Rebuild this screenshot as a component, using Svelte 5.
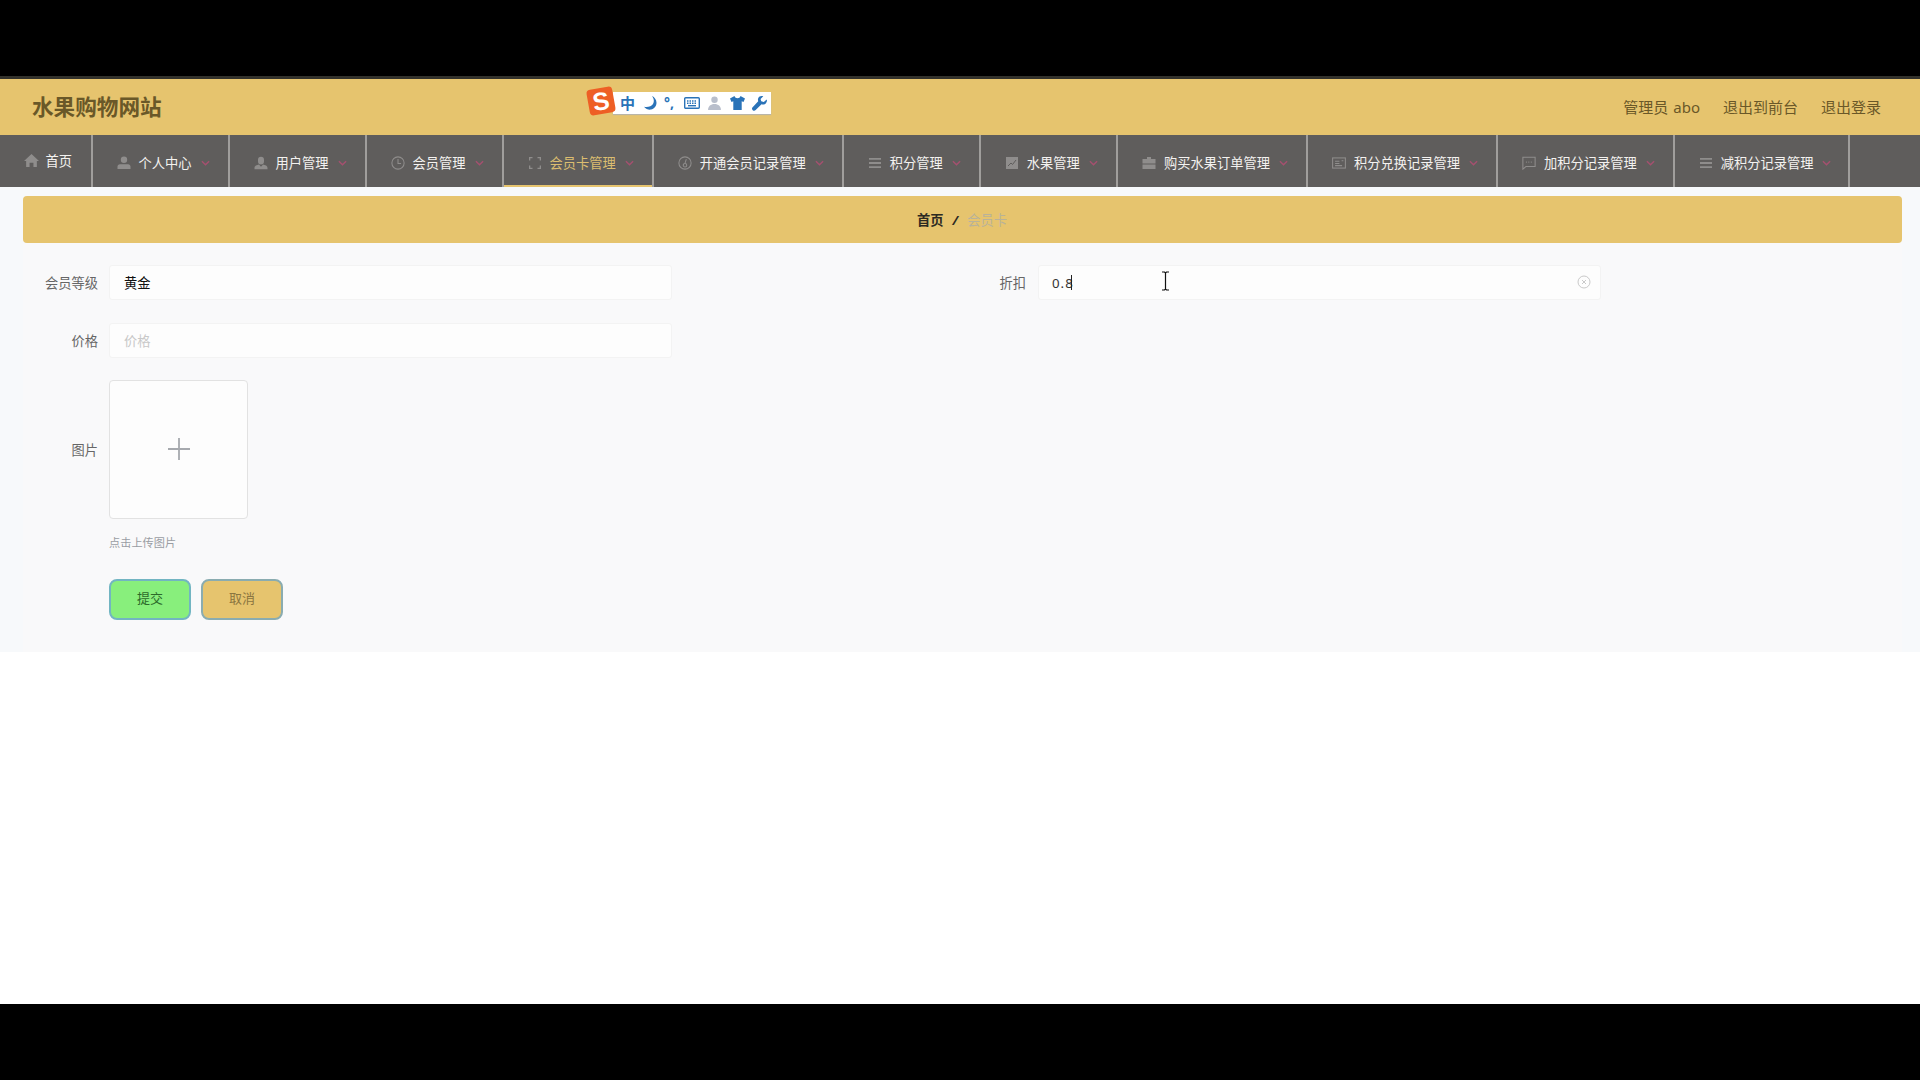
<script lang="ts">
  const icons: Record<string, string> = {
    home: 'M7 1 L14 7.5 H12 V13 H8.8 V9 H5.2 V13 H2 V7.5 H0 Z',
    person: 'M7 .5a3.200 3.200 0 1 1 0 6.400a3.200 3.200 0 0 1 0-6.400z M3 8.200h8c1.500 0 2.500 1 2.500 2.400V13H.5v-2.400c0-1.400 1-2.400 2.500-2.400z',
    user: 'M7 .8a3 3 0 0 1 3 3v1.700a3 3 0 0 1-6 0V3.800a3 3 0 0 1 3-3z M.5 13.200v-1.500c0-1.700 2.300-2.800 4.500-3.200l2 2.200 2-2.200c2.200.4 4.500 1.500 4.500 3.200v1.500z',
    card: 'M1 1h3.500v1.300H2.300v2.200H1z M9.500 1H13v3.500h-1.300V2.300H9.500z M1 9.500h1.300v2.200h2.200V13H1z M11.700 9.500H13V13H9.500v-1.300h2.200z',
    bars: 'M1 2h12v1.800H1z M1 6.100h12v1.800H1z M1 10.200h12V12H1z',
    chart: 'M1 1h12v12H1z',
    bag: 'M5 1h4v2h4.500v4.500h-13V3H5z M.5 8.500h13V13h-13z'
  };

  const menu = [
    { label: '个人中心', icon: 'person' },
    { label: '用户管理', icon: 'user' },
    { label: '会员管理', icon: 'clock' },
    { label: '会员卡管理', icon: 'card', active: true },
    { label: '开通会员记录管理', icon: 'gauge' },
    { label: '积分管理', icon: 'bars' },
    { label: '水果管理', icon: 'chart' },
    { label: '购买水果订单管理', icon: 'bag' },
    { label: '积分兑换记录管理', icon: 'ticket' },
    { label: '加积分记录管理', icon: 'chat' },
    { label: '减积分记录管理', icon: 'bars' }
  ];
</script>

<div class="screen">
  <header class="top">
    <h1>水果购物网站</h1>
    <div class="links">
      <span>管理员 abo</span>
      <span>退出到前台</span>
      <span>退出登录</span>
    </div>

    <div class="ime">
      <span class="ime-logo">S</span>
      <span class="ime-zh">中</span>
      <svg width="14" height="14" viewBox="0 0 14 14"><path fill="#2a73b8" d="M9 0c2 2.500 2.500 5.500 1 8-1.500 2.400-5 3.500-9 2.800C2.800 13 5.500 14 8 13.600c3-.5 5.500-3.500 5.500-6.800C13.500 3.800 11.500 1 9 0z" /></svg>
      <span class="ime-punct">°,</span>
      <svg width="16" height="12" viewBox="0 0 16 12"><rect x=".7" y=".7" width="14.600" height="10.600" rx="1" fill="none" stroke="#2a73b8" stroke-width="1.400" /><path stroke="#2a73b8" stroke-width="1.500" stroke-dasharray="1.500 1" d="M3 4h10M3 6.200h10" /><path stroke="#2a73b8" stroke-width="1.400" d="M4 8.700h8" /></svg>
      <svg width="15" height="15" viewBox="0 0 12 14"><circle cx="6" cy="3.500" r="3" fill="#b9bfcc" /><path fill="#b9bfcc" d="M0 13c0-3.500 2.500-5.500 6-5.500s6 2 6 5.500z" /></svg>
      <svg width="15" height="14" viewBox="0 0 15 14"><path fill="#2a73b8" d="M4.500 0 0 2.500l1.500 3.500 1.800-.8V14h8.400V5.200l1.800.8L15 2.500 10.500 0C10 1.500 9 2.200 7.500 2.200S5 1.500 4.500 0z" /></svg>
      <svg width="15" height="15" viewBox="0 0 14 14"><path fill="#2a73b8" d="M13.700 3.200 11 5.700 8.600 5 8 2.700 10.500.3C8.500-.4 6.500.4 5.800 2c-.4 1-.3 2 0 2.800L.6 10.500a1.900 1.900 0 0 0 2.800 2.600l5.500-5.300c1 .4 2.300.3 3.400-.4 1.400-1 2-3 1.400-4.200z" /></svg>
    </div>
  </header>

  <nav class="menu">
    <a class="item home" href="#/">
      <svg class="icon" viewBox="0 0 14 14"><path d={icons.home} /></svg>
      <span>首页</span>
    </a>
    {#each menu as m}
      <a class="item" class:active={m.active} href="#/">
        {#if m.icon === 'clock'}
          <svg class="icon line" viewBox="0 0 16 16"><circle cx="8" cy="8" r="7" /><path d="M8 3.500V8.500H11.500" /></svg>
        {:else if m.icon === 'gauge'}
          <svg class="icon line" viewBox="0 0 16 16"><circle cx="8" cy="8" r="7" /><circle cx="8" cy="10.500" r="2" /><path d="M8 8.500 9.500 3.500" /></svg>
        {:else if m.icon === 'ticket'}
          <svg class="icon line" viewBox="0 0 16 14"><rect x=".7" y="1.200" width="14.600" height="11.600" /><path d="M3.500 5h5M3.500 7.500h5M3.500 10h8M11 4.500h2" /></svg>
        {:else if m.icon === 'chat'}
          <svg class="icon line" viewBox="0 0 16 16"><path d="M1 1.500h14v10.500H4.500L1 15z" /><path stroke-dasharray="1 1.800" d="M4.500 7h7.500" /></svg>
        {:else if m.icon === 'chart'}
          <svg class="icon" viewBox="0 0 14 14"><path d={icons.chart} /><path class="spark" d="M3 10 6 7l1.500 1.500L11 4" /></svg>
        {:else}
          <svg class="icon" viewBox="0 0 14 14"><path d={icons[m.icon]} /></svg>
        {/if}
        <span>{m.label}</span>
        <svg class="arrow" viewBox="0 0 10 6"><path d="M1 1 5 5 9 1" /></svg>
      </a>
    {/each}
  </nav>

  <main class="content">
    <div class="panel">
      <div class="crumb">
        <b>首页</b>
        <i>/</i>
        <em>会员卡</em>
      </div>

      <form class="form">
        <div class="row">
          <div class="field">
            <label for="level">会员等级</label>
            <input id="level" value="黄金" />
          </div>
          <div class="field right">
            <label for="discount">折扣</label>
            <div class="box">
              <input id="discount" class="num" value="0.8" />
              <span class="caret"></span>
              <svg class="clear" viewBox="0 0 14 14"><circle cx="7" cy="7" r="6" /><path d="M5 5 9 9M9 5 5 9" /></svg>
              <svg class="ibeam" viewBox="0 0 9 20"><path d="M1 1h2.500l1 1 1-1H8M4.500 2v16M1 19h2.500l1-1 1 1H8" /></svg>
            </div>
          </div>
        </div>

        <div class="field">
          <label for="price">价格</label>
          <input id="price" placeholder="价格" />
        </div>

        <div class="field upload-field">
          <span class="label">图片</span>
          <div class="upload">
            <svg viewBox="0 0 22 22"><path d="M11 0V22M0 11H22" /></svg>
          </div>
        </div>

        <p class="hint">点击上传图片</p>

        <div class="actions">
          <button type="button" class="ok">提交</button>
          <button type="button" class="cancel">取消</button>
        </div>
      </form>
    </div>
  </main>
</div>

<style>
  :global(body) {
    background: #000;
  }

  .screen {
    width: 1920px;
    height: 1080px;
    box-sizing: border-box;
    padding: 76px 0;
    display: flex;
    flex-direction: column;
    background: #000;
    font-family: "Noto Sans", "Noto Sans CJK SC", sans-serif;
    font-size: 13.25px;
    overflow: hidden;
  }

  .top {
    position: relative;
    height: 59px;
    flex: none;
    box-sizing: border-box;
    border-top: 3px solid #33322c;
    background: #e6c46e;
    display: flex;
    align-items: center;
    justify-content: space-between;
    padding: 0 39px 0 32px;
    color: #6a5828;
  }

  h1 {
    margin: 0 0 3px;
    font-size: 21.6px;
    font-weight: 700;
    color: #6a5828;
  }

  .links {
    display: flex;
    gap: 23px;
    font-size: 15px;
    margin-bottom: 2px;
    word-spacing: 1px;
  }

  .ime {
    position: absolute;
    left: 613px;
    top: 13px;
    width: 158px;
    height: 22px;
    box-sizing: border-box;
    padding-left: 7px;
    background: #fff;
    box-shadow: 0 1px 1px #b9b5a8;
    display: flex;
    align-items: center;
    gap: 7.5px;
  }

  .ime-logo {
    position: absolute;
    left: -25px;
    top: -4px;
    width: 26px;
    height: 26px;
    border-radius: 4px;
    transform: rotate(-10deg);
    background: #ee5f25;
    color: #fff;
    font: 700 25px/26px "Liberation Sans", sans-serif;
    text-align: center;
  }

  .ime-zh {
    color: #2a73b8;
    font-size: 15px;
    font-weight: 700;
    line-height: 1;
  }

  .ime-punct {
    width: 12px;
    color: #2a73b8;
    font-weight: 700;
    font-size: 14px;
    line-height: 1;
  }

  .menu {
    flex: none;
    height: 52px;
    display: flex;
    background: #5f5d5c;
  }

  .item {
    flex: none;
    display: flex;
    align-items: center;
    box-sizing: border-box;
    padding: 3px 18px 0 24px;
    border-right: 2px solid #a09e9c;
    color: #f4f2f0;
    text-decoration: none;
  }

  .item:last-child {
    padding-right: 17px;
  }

  .item.home {
    padding: 0 18.500px 2px 23.500px;
  }

  .item.active {
    color: #dcbd70;
    box-shadow: inset 0 -2px 0 #e6c46e;
  }

  .icon {
    width: 14px;
    height: 14px;
    margin-right: 8px;
    fill: #8f8d8c;
  }

  .home .icon {
    width: 15px;
    height: 15px;
    margin-right: 7px;
  }

  .icon.line {
    fill: none;
    stroke: #8f8d8c;
    stroke-width: 1.2;
  }

  .spark {
    fill: none;
    stroke: #5f5d5c;
    stroke-width: 1;
  }

  .arrow {
    flex: none;
    width: 9px;
    height: 6px;
    margin-left: 9px;
    fill: none;
    stroke: #a5506f;
    stroke-width: 1.600;
  }

  .content {
    flex: 1;
    background: #fff;
  }

  .panel {
    padding: 9px 18px 0 23px;
    background: #f7f9fb;
  }

  .crumb {
    height: 47px;
    border-radius: 4px;
    background: #e6c46e;
    display: flex;
    align-items: center;
    justify-content: center;
    padding-right: 1px;
  }

  .crumb b {
    color: #2c2a22;
    font-weight: 700;
  }

  .crumb i {
    margin: 0 9px;
    color: #2c2a22;
    font-weight: 700;
  }

  .crumb em {
    color: #b8b29a;
    font-style: normal;
  }

  .form {
    padding: 22px 0 32px;
    background: #f9f9fa;
  }

  .row {
    display: grid;
    grid-template-columns: 929px 929px;
  }

  .field {
    display: flex;
    align-items: center;
    height: 35px;
    margin-bottom: 23px;
  }

  label,
  .label {
    width: 75px;
    margin-right: 11px;
    text-align: right;
    color: #666;
  }

  .right label {
    width: 74px;
    margin-right: 12px;
  }

  input {
    width: 563px;
    height: 35px;
    box-sizing: border-box;
    padding: 0 14px;
    border: 1px solid #f3f3f3;
    border-radius: 3px;
    background: #fdfdfd;
    color: #111;
    font: inherit;
    outline: none;
  }

  input::placeholder {
    color: #c8c8c8;
  }

  .box {
    position: relative;
    width: 563px;
    height: 35px;
  }

  .num {
    padding-left: 13px;
    letter-spacing: 1px;
    color: #333;
  }

  .caret {
    position: absolute;
    left: 33px;
    top: 10px;
    width: 1px;
    height: 15px;
    background: #222;
  }

  .clear {
    position: absolute;
    right: 10px;
    top: 10px;
    width: 14px;
    height: 14px;
    fill: none;
    stroke: #c9c9c9;
    stroke-width: 1;
  }

  .ibeam {
    position: absolute;
    left: 123px;
    top: 6px;
    width: 9px;
    height: 20px;
    fill: none;
    stroke: #111;
    stroke-width: 1.200;
  }

  .upload-field {
    height: 139px;
    margin-bottom: 0;
    margin-top: -1px;
  }

  .upload {
    width: 139px;
    height: 139px;
    box-sizing: border-box;
    border: 1px solid #e2e2e2;
    border-radius: 4px;
    background: #fdfdfd;
    display: flex;
    align-items: center;
    justify-content: center;
  }

  .upload svg {
    width: 22px;
    height: 22px;
    margin-bottom: 1px;
    fill: none;
    stroke: #a6a9ae;
    stroke-width: 1.800;
  }

  .hint {
    margin: 16px 0 0 86px;
    font-size: 11.2px;
    line-height: 16px;
    color: #9a9da3;
  }

  .actions {
    display: flex;
    gap: 10px;
    margin: 28px 0 0 86px;
  }

  button {
    width: 82px;
    height: 41px;
    box-sizing: border-box;
    border: 2px solid #72b5c2;
    border-radius: 8px;
    padding: 0 0 4px;
    font: inherit;
    font-size: 13px;
  }

  .ok {
    background: #88ef7c;
    color: #2c6a2a;
  }

  .cancel {
    background: #e6c46e;
    border-color: #8aacb0;
    color: #8a7540;
  }
</style>
